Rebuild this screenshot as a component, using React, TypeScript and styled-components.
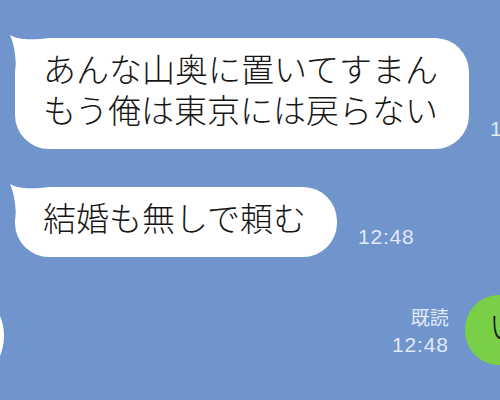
import React from 'react';
import styled, { createGlobalStyle } from 'styled-components';

const GlobalStyle = createGlobalStyle`
  html, body {
    margin: 0;
    padding: 0;
    background: #6f95cc;
  }
  body {
    font-family: "Noto Sans CJK JP", "Noto Sans", sans-serif;
  }
`;

const Tail: React.FC = () => (
    <TailSvg width="32" height="40" viewBox="0 0 32 40">
        <path d="M1 1 C8 5 16 6 32 5 L32 40 L7 40 C7 22 5 10 1 1 Z" fill="#ffffff" />
    </TailSvg>
);

const App: React.FC = () => {
    return (
        <Screen>
            <GlobalStyle />
            <Chat>
                <Row>
                    <Bubble>
                        <Tail />
                        あんな山奥に置いてすまん
                        <br />
                        もう俺は東京には戻らない
                    </Bubble>
                    <Time>12:48</Time>
                </Row>
                <Row>
                    <Bubble>
                        <Tail />
                        結婚も無しで頼む
                    </Bubble>
                    <Time>12:48</Time>
                </Row>
                <Row $mine>
                    <Blob />
                    <Meta>
                        <Read>既読</Read>
                        <Time>12:48</Time>
                    </Meta>
                    <Bubble $mine>いいよ</Bubble>
                </Row>
            </Chat>
        </Screen>
    );
};

export default App;

const Screen = styled.div`
  width: 500px;
  height: 400px;
  overflow: hidden;
  background: #6f95cc;
`;

const Chat = styled.div`
  width: 630px;
  display: flex;
  flex-direction: column;
  gap: 38px;
  padding: 38px 12px 0 15px;
  box-sizing: border-box;
`;

const Row = styled.div<{ $mine?: boolean }>`
  display: flex;
  flex-direction: row;
  align-items: flex-end;
  gap: ${({ $mine }) => ($mine ? '16px' : '21px')};
`;

const Bubble = styled.div<{ $mine?: boolean }>`
  position: relative;
  background: ${({ $mine }) => ($mine ? '#79d047' : '#ffffff')};
  color: #161616;
  border-radius: 34px;
  padding: ${({ $mine }) => ($mine ? '10px 31px 19px 24px' : '10px 31px 19px 28px')};
  font-size: 33px;
  font-weight: 300;
  line-height: 41px;
  white-space: nowrap;
`;

const TailSvg = styled.svg`
  position: absolute;
  left: -6px;
  top: -4px;
  display: block;
`;

const Time = styled.div`
  font-family: "Liberation Sans", Arial, sans-serif;
  font-size: 21px;
  line-height: 21px;
  letter-spacing: 0.8px;
  color: #e1e9f6;
  margin-bottom: 10px;
  white-space: nowrap;
`;

const Meta = styled.div`
  display: flex;
  flex-direction: column;
  align-items: flex-end;
  margin-left: auto;
  gap: 5px;
`;

const Read = styled.div`
  font-size: 19px;
  line-height: 24px;
  color: #e1e9f6;
`;

const Blob = styled.div`
  width: 104px;
  height: 104px;
  border-radius: 50%;
  background: #ffffff;
  margin: -23px 0 -23px -115px;
`;
